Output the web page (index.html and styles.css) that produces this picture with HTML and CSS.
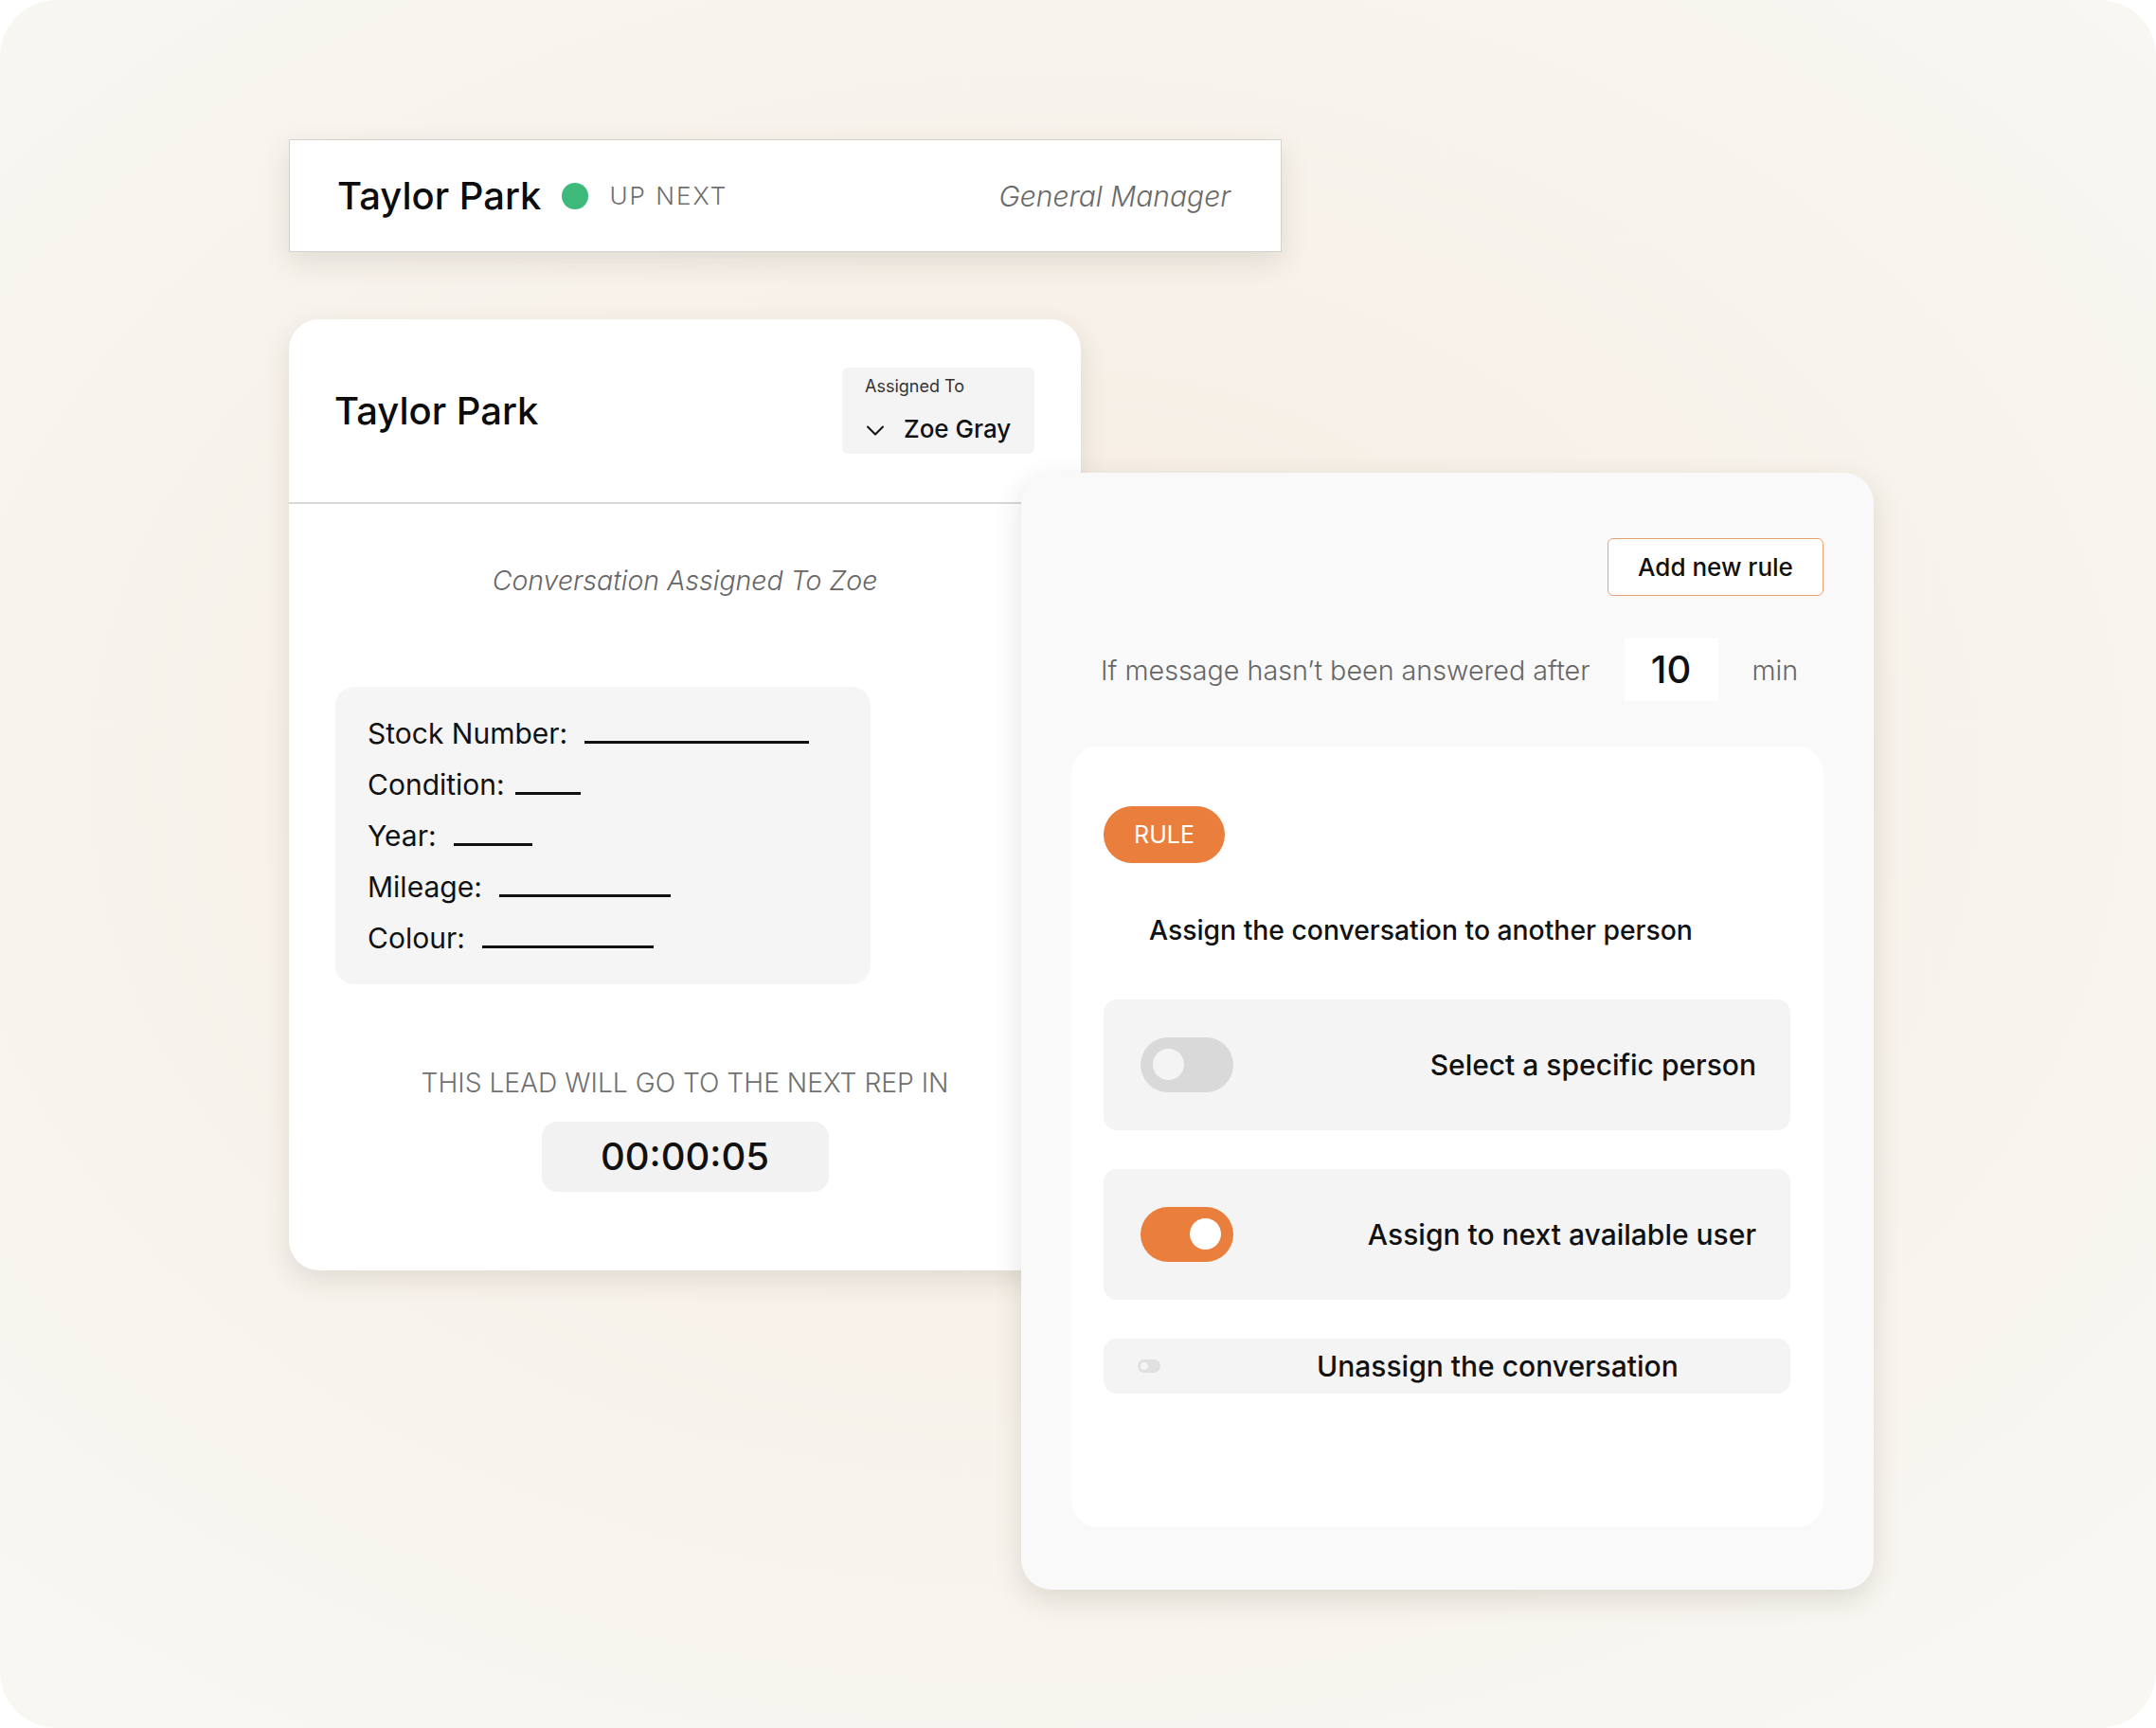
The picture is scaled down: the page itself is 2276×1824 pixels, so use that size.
FILE: index.html
```html
<!DOCTYPE html>
<html>
<head>
  <meta charset="utf-8">
  <title>Lead Routing</title>
  <link rel="stylesheet" href="styles.css">
</head>
<body>
  <div class="frame">
    <div class="topbar">
      <span class="topbar-name">Taylor Park</span>
      <span class="dot"></span>
      <span class="up-next">UP NEXT</span>
      <span class="role">General Manager</span>
    </div>

    <div class="stage">
      <div class="lead-card">
        <div class="lead-header">
          <h1>Taylor Park</h1>
          <div class="assigned">
            <div class="assigned-label">Assigned To</div>
            <div class="assigned-value">
              <svg class="chevron" width="20" height="11" viewBox="0 0 20 11">
                <polyline points="2,1.5 10,9.5 18,1.5" fill="none" stroke="#111" stroke-width="2" stroke-linecap="round" stroke-linejoin="round"/>
              </svg>
              <span>Zoe Gray</span>
            </div>
          </div>
        </div>

        <div class="lead-body">
          <div class="assigned-note">Conversation Assigned To Zoe</div>

          <div class="specs">
            <div class="spec">Stock Number:<span class="blank" style="width:237px"></span></div>
            <div class="spec">Condition:<span class="blank tight" style="width:69px"></span></div>
            <div class="spec">Year:<span class="blank" style="width:83px"></span></div>
            <div class="spec">Mileage:<span class="blank" style="width:181px"></span></div>
            <div class="spec">Colour:<span class="blank" style="width:181px"></span></div>
          </div>

          <div class="next-rep">THIS LEAD WILL GO TO THE NEXT REP IN</div>
          <div class="timer">00:00:05</div>
        </div>
      </div>

      <div class="rules-card">
        <div class="rules-top">
          <button class="add-rule">Add new rule</button>
        </div>

        <div class="wait-row">
          <span class="wait-text">If message hasn’t been answered after</span>
          <span class="wait-value">10</span>
          <span class="wait-text">min</span>
        </div>

        <div class="rule-panel">
          <span class="rule-pill">RULE</span>
          <div class="rule-title">Assign the conversation to another person</div>

          <div class="option first">
            <span class="toggle"><span class="knob"></span></span>
            <span class="option-text">Select a specific person</span>
          </div>

          <div class="option">
            <span class="toggle on"><span class="knob"></span></span>
            <span class="option-text">Assign to next available user</span>
          </div>

          <div class="option small">
            <span class="toggle mini"><span class="knob"></span></span>
            <span class="option-text">Unassign the conversation</span>
          </div>
        </div>
      </div>
    </div>
  </div>
</body>
</html>
```

FILE: styles.css
```css
body {
  margin: 0;
  background: #ffffff;
  font-family: Inter, 'Liberation Sans', sans-serif;
  color: #111;
}

.frame {
  width: 2276px;
  height: 1824px;
  box-sizing: border-box;
  padding: 147px 0 0 305px;
  border-radius: 60px;
  overflow: hidden;
  background: radial-gradient(ellipse 70% 65% at 48% 45%, #f6ece1 0%, #f7f1e9 45%, #f8f7f2 100%);
}

/* top bar */

.topbar {
  width: 1048px;
  height: 119px;
  box-sizing: border-box;
  display: flex;
  align-items: center;
  padding: 0 53px 0 50px;
  background: #fff;
  border: 1px solid #d2d2d0;
  box-shadow: 0 10px 28px rgba(60, 50, 30, 0.12);
}

.topbar-name {
  font-size: 40px;
  font-weight: 500;
  color: #0c0c0c;
}

.dot {
  width: 28px;
  height: 28px;
  border-radius: 50%;
  background: #3dba7a;
  margin-left: 22px;
}

.up-next {
  margin-left: 22px;
  font-size: 26px;
  font-weight: 300;
  letter-spacing: 2px;
  color: #6f6f6f;
}

.role {
  margin-left: auto;
  font-size: 30px;
  font-style: italic;
  font-weight: 300;
  color: #6a6a6a;
}

/* cards */

.stage {
  display: flex;
  align-items: flex-start;
}

.lead-card {
  width: 836px;
  height: 1004px;
  margin-top: 71px;
  flex-shrink: 0;
  background: #fff;
  border-radius: 32px;
  box-shadow: 0 10px 28px rgba(60, 50, 30, 0.12);
}

.lead-header {
  height: 195px;
  box-sizing: border-box;
  display: flex;
  align-items: center;
  justify-content: space-between;
  padding: 0 49px 0 48px;
  border-bottom: 2px solid #d8d8d8;
}

.lead-header h1 {
  margin: 0;
  font-size: 40px;
  font-weight: 500;
  color: #0c0c0c;
}

.assigned {
  width: 203px;
  height: 91px;
  box-sizing: border-box;
  padding: 8px 18px 0 24px;
  background: #f4f4f4;
  border-radius: 6px;
}

.assigned-label {
  font-size: 18px;
  line-height: 24px;
  color: #333;
}

.assigned-value {
  display: flex;
  align-items: center;
  margin-top: 17px;
  font-size: 26px;
  line-height: 32px;
  font-weight: 500;
}

.chevron {
  margin: 3px 20px 0 1px;
}

.lead-body {
  display: flex;
  flex-direction: column;
  align-items: center;
}

.assigned-note {
  margin-top: 64px;
  font-size: 28.5px;
  line-height: 1.2;
  font-style: italic;
  font-weight: 300;
  color: #666;
}

.specs {
  align-self: flex-start;
  width: 565px;
  height: 314px;
  box-sizing: border-box;
  margin: 95px 0 0 49px;
  padding: 22px 0 0 34px;
  background: #f5f5f5;
  border-radius: 20px;
}

.spec {
  font-size: 30px;
  line-height: 54px;
  color: #111;
}

.blank {
  display: inline-block;
  height: 3px;
  margin-left: 18px;
  background: #111;
  vertical-align: baseline;
}

.blank.tight {
  margin-left: 11px;
}

.next-rep {
  margin-top: 88px;
  font-size: 28.2px;
  line-height: 1.2;
  font-weight: 300;
  color: #707070;
}

.timer {
  width: 303px;
  height: 74px;
  margin-top: 23px;
  text-align: center;
  font-size: 40px;
  line-height: 74px;
  font-weight: 500;
  background: #f2f2f2;
  border-radius: 16px;
}

/* rules card */

.rules-card {
  position: relative;
  width: 900px;
  height: 1179px;
  box-sizing: border-box;
  flex-shrink: 0;
  margin: 233px 0 0 -63px;
  padding: 69px 53px 0 53px;
  background: #f9f9f9;
  border-radius: 32px;
  box-shadow: 0 10px 30px rgba(60, 50, 30, 0.14);
}

.rules-top {
  display: flex;
  justify-content: flex-end;
}

.add-rule {
  width: 228px;
  height: 61px;
  font-family: inherit;
  font-size: 26px;
  font-weight: 500;
  color: #111;
  background: #fff;
  border: 1.5px solid #e8a274;
  border-radius: 6px;
}

.wait-row {
  display: flex;
  align-items: center;
  gap: 36px;
  margin-top: 45px;
  padding-left: 31px;
}

.wait-text {
  font-size: 28.7px;
  font-weight: 300;
  color: #666;
}

.wait-value {
  width: 99px;
  height: 66px;
  text-align: center;
  font-size: 40px;
  line-height: 66px;
  font-weight: 500;
  background: #fff;
}

.rule-panel {
  height: 824px;
  box-sizing: border-box;
  margin-top: 48px;
  padding: 63px 35px 0 34px;
  background: #fff;
  border-radius: 28px;
}

.rule-pill {
  display: inline-block;
  width: 128px;
  height: 60px;
  text-align: center;
  font-size: 25px;
  line-height: 60px;
  color: #fff;
  background: #ea7e3c;
  border-radius: 30px;
}

.rule-title {
  margin: 55px 0 0 48px;
  font-size: 28.3px;
  line-height: 1.2;
  font-weight: 500;
}

.option {
  height: 138px;
  box-sizing: border-box;
  display: flex;
  align-items: center;
  margin-top: 41px;
  padding: 0 36px 0 39px;
  background: #f4f4f4;
  border-radius: 14px;
}

.option.first {
  margin-top: 55px;
}

.option-text {
  margin-left: auto;
  font-size: 30px;
  font-weight: 500;
}

.option.small {
  height: 58px;
  padding-left: 36px;
}

.option.small .option-text {
  margin-left: 165px;
}

.toggle {
  width: 98px;
  height: 58px;
  box-sizing: border-box;
  display: flex;
  align-items: center;
  padding: 0 13px;
  border-radius: 29px;
  background: #d9d9d9;
}

.knob {
  width: 33px;
  height: 33px;
  border-radius: 50%;
  background: #f4f4f4;
}

.toggle.on {
  justify-content: flex-end;
  background: #ea7e3c;
}

.toggle.on .knob {
  background: #fff;
}

.toggle.mini {
  width: 24px;
  height: 14px;
  padding: 0 3px;
  border-radius: 7px;
  background: #e0e0e0;
}

.toggle.mini .knob {
  width: 8px;
  height: 8px;
}
```
